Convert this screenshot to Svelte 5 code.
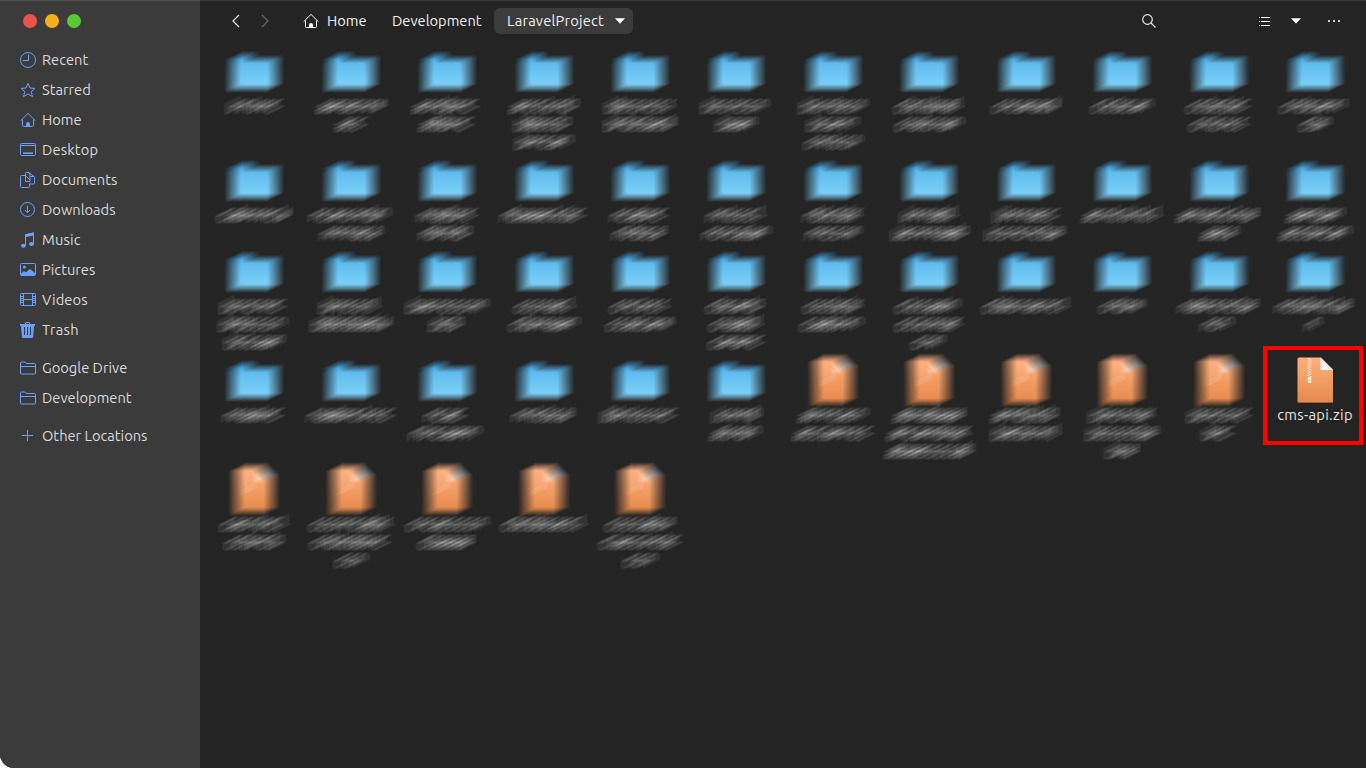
<script>
  const places = [
    [
      ['clock', 'Recent', 0],
      ['star', 'Starred', 0],
      ['home', 'Home', 0],
      ['desktop', 'Desktop', 0.15],
      ['documents', 'Documents', 0],
      ['downloads', 'Downloads', 0],
      ['music', 'Music', 0.15],
      ['pictures', 'Pictures', 0],
      ['videos', 'Videos', 0.15],
      ['trash', 'Trash', 0.3],
    ],
    [
      ['folder', 'Google Drive', 0],
      ['folder', 'Development', 0],
    ],
    [['plus', 'Other Locations', 0]],
  ];

  // Width of every obscured label line, per entry.
  const folders = [
    [61], [74, 36], [74, 60], [74, 64, 62], [75, 76], [74, 45], [72, 56, 62], [74, 72], [72], [66], [70, 64], [74, 36],
    [78], [88, 66], [64, 60], [92], [64, 60], [64, 72], [64, 60], [64, 82], [72, 88], [84], [90, 42], [62, 76],
    [72, 74, 64], [68, 84], [86, 40], [64, 74], [64, 72], [64, 58, 60], [64, 70], [72, 72, 40], [92], [50], [86, 40], [84, 24],
    [66], [92], [50, 80], [68], [86], [54, 56],
  ];
  const archives = [[74, 84], [76, 88, 92], [74, 74], [70, 76, 36], [68, 38]];
  const lastArchives = [[72, 62], [88, 86, 36], [86, 62], [90], [74, 86, 38]];

  const entries = [
    ...folders.map((lines) => ({ kind: 'dir', lines })),
    ...archives.map((lines) => ({ kind: 'zip', lines })),
    { kind: 'zip', name: 'cms-api.zip' },
    ...lastArchives.map((lines) => ({ kind: 'zip', lines })),
  ];

  // Diagonal averaging kernel, 17 columns by 9 rows, rising to the right.
  const kernel = (() => {
    const k = Array.from({ length: 9 }, () => Array(17).fill(0));
    for (let i = 0; i < 17; i++) {
      const y = 8 - i / 2;
      const lo = Math.floor(y);
      k[lo][i] += 2 * (1 - (y - lo));
      if (y > lo) k[lo + 1][i] += 2 * (y - lo);
    }
    return k.map((r) => r.join(' ')).join(' ');
  })();

  function scribble(width, seed) {
    let s = seed * 7919 + 13;
    const rnd = () => (s = (s * 16807) % 2147483647) / 2147483647;
    for (let i = 0; i < 3; i++) rnd();
    const w = Math.max(7, width - 14);
    let x = 49 - w / 2;
    const end = 49 + w / 2;
    let d = '';
    while (x < end - 3) {
      const g = Math.min(6 + rnd() * 2, end - x) - 1.5;
      const r = rnd();
      if (r < 0.3) d += `M${x} 13V5.5M${x} 6h${g - 1}l1 1V13`;
      else if (r < 0.6) d += `M${x + g} 6h${-g + 1}l-1 1v5l1 1h${g - 1}`;
      else if (r < 0.75) d += `M${x} 2V13h${g}V6h${-g}`;
      else if (r < 0.9) d += `M${x} 6h${g}v7h${-g}V9.5h${g}`;
      else d += `M${x + 1} 2.5V13h2`;
      x += r >= 0.9 ? 4.6 : g + 2.5;
    }
    return d;
  }
</script>

{#snippet icon(name)}
  <svg class="icon" width="16" height="16" viewBox="0 0 16 16" fill="none" stroke="currentColor">
    {#if name === 'clock'}
      <circle cx="8" cy="8" r="7.5" /><path d="M8.5 2.5v6H3" />
    {:else if name === 'star'}
      <path d="M8 1.3l2 4.7 5 .4-3.8 3.2 1.3 5L8 12l-4.500 2.600 1.300-5L1 6.400 6 6z" stroke-linejoin="round" />
    {:else if name === 'home'}
      <path d="M.7 8.600L8 1.400l7.300 7.200M2.500 7.500v6q0 1 1 1h9q1 0 1-1v-6" /><path d="M6 15v-3.500q0-1.500 2-1.500t2 1.500V15z" fill="currentColor" stroke="none" />
    {:else if name === 'desktop'}
      <rect x=".5" y="1.500" width="15" height="12" rx="1" /><path d="M1 3.500h14" /><path d="M3 11.200h10" stroke-width="1.600" />
    {:else if name === 'documents'}
      <path d="M5.500 3.500h-4q-1 0-1 1v10q0 1 1 1h7q1 0 1-1v-3" /><path d="M5.500 9.500v-8q0-1 1-1H9l5.500 4.500v6q0 1-1 1H10M5.500 3.500L10 8V3.500L9 .5M5.500 9.500H10V8M10 4.500h4" />
    {:else if name === 'downloads'}
      <circle cx="7.500" cy="7.500" r="7" /><path d="M7.500 4v6.500M5 8l2.500 2.700L10 8" />
    {:else if name === 'music'}
      <path d="M5.500 13V2.800L13.500 1v10.500" /><path d="M5 2.500L14 .3v3L5 5.300z" fill="currentColor" stroke="none" /><ellipse cx="3.400" cy="13.800" rx="2.400" ry="2" fill="currentColor" stroke="none" /><ellipse cx="11.500" cy="11.900" rx="2.500" ry="2" fill="currentColor" stroke="none" />
    {:else if name === 'pictures'}
      <rect x=".5" y="1.500" width="15" height="12" rx="1" /><circle cx="4.500" cy="5" r="1.500" fill="currentColor" stroke="none" /><path d="M1 11.500L4 9l2 1.500L9.800 7 15 11v2.500H1z" fill="currentColor" stroke="none" />
    {:else if name === 'videos'}
      <rect x=".5" y="1.500" width="15" height="12" rx="1" /><path d="M3.500 2v11M12.500 2v11M4 7.500h8" /><path d="M1 4.500h2M1 6.500h2M1 8.500h2M1 10.500h2M13 4.500h2M13 6.500h2M13 8.500h2M13 10.500h2" />
    {:else if name === 'trash'}
      <path d="M5.500 2.500V.7h4v1.800" /><path d="M0 2h15v2h-1l-.8 10.500q-.1 1.500-1.500 1.500H3.300q-1.400 0-1.500-1.500L1 4H0z" fill="currentColor" stroke="none" /><path class="slot" d="M4.500 5v8M7.500 5v8M10.500 5v8" />
    {:else if name === 'folder'}
      <path d="M.5 13V3q0-1 1-1h3.700l1 1.500h8.300q1 0 1 1V13q0 1-1 1h-13q-1 0-1-1zM1 6.500h14" />
    {:else}
      <path d="M7.500 2v11M2 7.500h11" />
    {/if}
  </svg>
{/snippet}

<svg class="defs" width="0" height="0">
  <defs>
    <filter id="smear" x="-10%" y="-60%" width="120%" height="220%" color-interpolation-filters="sRGB">
      <feConvolveMatrix order="17 9" kernelMatrix={kernel} divisor="34" targetX="8" targetY="4" edgeMode="none" />
    </filter>
    <filter id="smear-art" x="-10%" y="-10%" width="120%" height="120%" color-interpolation-filters="sRGB">
      <feConvolveMatrix order="17 9" kernelMatrix={kernel} divisor="34" targetX="8" targetY="4" edgeMode="none" />
      <feGaussianBlur stdDeviation="0.5" />
    </filter>
    <linearGradient id="blue" x1="0" y1="0" x2="0" y2="1"><stop offset="0" stop-color="#5cb8ec" /><stop offset="1" stop-color="#7fd2fa" /></linearGradient>
    <linearGradient id="orange" x1="0" y1="0" x2="0" y2="1"><stop offset="0" stop-color="#ffb07e" /><stop offset="1" stop-color="#e58a4c" /></linearGradient>
    <linearGradient id="fold" x1="0" y1="1" x2="1" y2="0"><stop offset="0" stop-color="#fff" /><stop offset="1" stop-color="#ddd" /></linearGradient>
  </defs>
</svg>

<div class="window">
  <aside>
    <div class="controls"><i class="close"></i><i class="min"></i><i class="max"></i></div>
    <nav>
      {#each places as group}
        <ul>
          {#each group as [glyph, label, spacing]}
            <li>{@render icon(glyph)}<span style:letter-spacing="{spacing}px">{label}</span></li>
          {/each}
        </ul>
      {/each}
    </nav>
  </aside>

  <main>
    <header>
      <div class="history">
        <svg width="8" height="14" viewBox="0 0 8 14" fill="none" stroke="#eee" stroke-width="1.200"><path d="M7 1L1 7l6 6" /></svg>
        <svg width="8" height="14" viewBox="0 0 8 14" fill="none" stroke="#666" stroke-width="1.200"><path d="M1 1l6 6-6 6" /></svg>
      </div>
      <div class="crumbs">
        <div class="crumb home">{@render icon('home')}<span>Home</span></div>
        <div class="crumb">Development</div>
        <div class="crumb active"><span>LaravelProject</span><svg width="10" height="6" viewBox="0 0 10 6"><path d="M0 .3h10L5 5.700z" fill="#fff" /></svg></div>
      </div>
      <div class="tools">
        <svg class="search" width="14" height="14" viewBox="0 0 14 14" fill="none" stroke="#e8e8e8" stroke-width="1.200"><circle cx="5.500" cy="5.500" r="4.800" /><path d="M9 9l4.500 4.500" /></svg>
        <svg class="list" width="11" height="9" viewBox="0 0 11 9" fill="#fff"><path d="M0 0h1v1H0zM2 0h9v1H2zM0 4h1v1H0zM2 4h9v1H2zM0 8h1v1H0zM2 8h9v1H2z" /></svg>
        <svg class="down" width="10" height="6" viewBox="0 0 10 6"><path d="M0 .3h10L5 5.700z" fill="#fff" /></svg>
        <svg class="more" width="12" height="2" viewBox="0 0 12 2" fill="#ccc"><path d="M0 0h2v2H0zM5 0h2v2H5zM10 0h2v2h-2z" /></svg>
      </div>
    </header>

    <div class="files">
      {#each entries as entry, n}
        <div class="entry" class:marked={entry.name}>
          <svg class="art" class:smeared={!entry.name} width="96" height="55" viewBox="0 0 96 55">
            {#if entry.kind === 'dir'}
              <path d="M27 15q0-2 2-2h13q1.500 0 2.500 1.500l1.500 2.500h21q2 0 2 2v10H27z" fill="#3f9bd4" />
              <rect x="26.500" y="17.500" width="43.500" height="29" rx="2" fill="url(#blue)" />
            {:else}
              <path d="M32 6.500h22l12 12v33H32q-1.500 0-1.500-1.500v-42Q30.500 6.500 32 6.500z" fill="url(#orange)" />
              <path d="M30.500 50q0 1.500 1.500 1.500h33q1 0 1-1.500" fill="none" stroke="#a9673c" stroke-width=".7" />
              <path d="M53.500 6.500l12.500 12.500H55q-1.500 0-1.500-1.500z" fill="url(#fold)" />
              <g opacity={entry.name ? 1 : 0.7}>
                <path d="M41.500 7v19M43.500 8.200v18" stroke="#ffe5d3" stroke-width="1.600" stroke-dasharray="1.200 1.200" />
                <rect x="40.800" y="26" width="3.500" height="6" rx="1" fill="#fff0e4" />
                <rect x="41.800" y="28.500" width="1.500" height="1.500" fill="#f3ad7e" />
              </g>
            {/if}
          </svg>
          {#if entry.name}
            <span class="label">{entry.name}</span>
          {:else}
            {#each entry.lines as width, l}
              <svg class="line" width="96" height="18" viewBox="0 0 96 18"><path d={scribble(width, n * 3 + l + 1)} fill="none" stroke="#dedede" stroke-width="1.400" /></svg>
            {/each}
          {/if}
        </div>
      {/each}
    </div>
  </main>
</div>

<style>
  :global(body) { background: #fff; overflow: hidden; }
  .defs { position: absolute; }
  .window {
    display: flex;
    box-sizing: border-box;
    width: 1366px;
    height: 768px;
    overflow: hidden;
    border-radius: 0 0 0 14px;
    background: #242424;
    color: #d9d9d9;
    font: 14.667px/18px "Ubuntu", "Noto Sans", sans-serif;
  }
  svg { display: block; flex: none; }
  aside {
    flex: none;
    box-sizing: border-box;
    width: 200px;
    border-top: 1px solid #505050;
    background: #3b3b3b;
  }
  .controls { display: flex; gap: 8px; padding: 13px 0 0 23px; }
  .controls i { width: 14px; height: 14px; border-radius: 50%; }
  .close { background: #ea534c; }
  .min { background: #f3b01c; }
  .max { background: #58c934; }
  nav { padding-top: 17px; }
  ul { list-style: none; margin: 0 0 8px; padding: 0; }
  li { display: flex; align-items: center; gap: 6px; height: 30px; padding-left: 20px; white-space: nowrap; }
  li .icon { color: #6a9ffb; }
  .slot { stroke: #3b3b3b; }
  main { flex: 1; min-width: 0; border-top: 1px solid #383838; }
  header { display: flex; align-items: center; height: 40px; margin-bottom: 1px; padding-right: 26px; box-sizing: border-box; color: #f2f2f2; }
  .history { display: flex; gap: 21px; padding-left: 32px; }
  .crumbs { display: flex; align-items: center; padding-left: 34px; }
  .crumb { display: flex; align-items: center; height: 26px; }
  .home { gap: 8px; width: 89px; }
  .crumb:nth-child(2) { width: 102px; }
  .active { justify-content: space-between; width: 139px; padding: 0 8px 0 13px; box-sizing: border-box; border-radius: 6px; background: #3c3c3c; letter-spacing: 0.2px; }
  .tools { display: flex; align-items: center; margin-left: auto; }
  .search { margin-right: 1px; }
  .list { margin-left: 102px; }
  .down { margin-left: 21px; }
  .more { margin-left: 27px; }
  .files { display: grid; grid-template-columns: repeat(12, 96.450px); padding-left: 6px; }
  .entry { position: relative; display: flex; flex-direction: column; align-items: center; }
  .smeared { filter: url(#smear-art); }
  .line { filter: url(#smear); }
  .label { color: #e4e4e4; white-space: nowrap; letter-spacing: 0.3px; }
  .marked::after {
    content: "";
    position: absolute;
    left: -4px;
    top: -5px;
    width: 92px;
    height: 91px;
    border: 4px solid #fe0000;
  }
</style>
